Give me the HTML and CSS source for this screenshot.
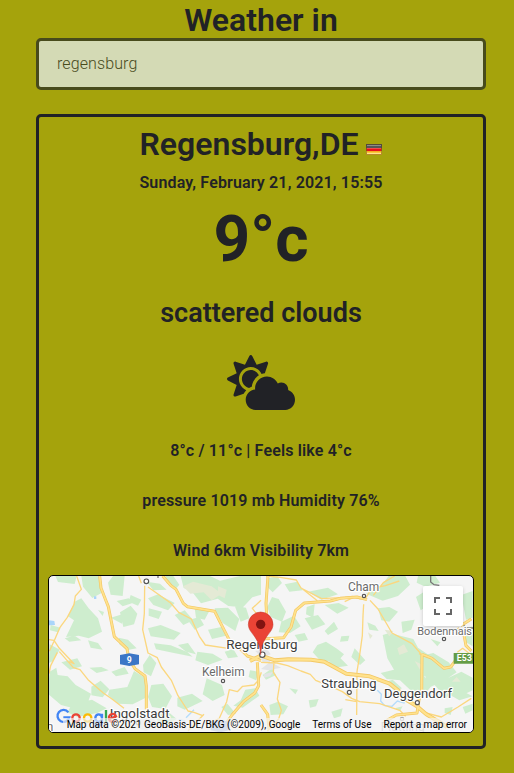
FILE: index.html
```html
<!DOCTYPE html>
<html lang="en">
<head>
<meta charset="utf-8">
<title>Weather</title>
<link rel="stylesheet" href="styles.css">
</head>
<body>
<main class="app">
  <h1 class="title">Weather in</h1>
  <input class="search" type="text" value="regensburg" aria-label="City">
  <section class="card">
    <h2 class="city">Regensburg,DE
      <svg class="flag" viewBox="0 0 16 11" shape-rendering="crispEdges"><path fill="#54493c" d="M0 0h16v4H0z"/><path fill="#9a4a1c" d="M0 4h16v3H0z"/><path fill="#b58a2a" d="M0 7h16v4H0z"/><path fill="#8d8d88" d="M1 1h14v1H1z"/><path fill="#555" d="M1 2h14v2H1z"/><path fill="#f04a4c" d="M1 4h14v1H1z"/><path fill="#e8101c" d="M1 5h14v2H1z"/><path fill="#f2ae20" d="M1 7h14v1H1z"/><path fill="#fbc83c" d="M1 8h14v1H1z"/><path fill="#ffe68a" d="M1 9h14v1H1z"/></svg>
    </h2>
    <p class="date">Sunday, February 21, 2021, 15:55</p>
    <p class="temp">9°c</p>
    <p class="summary">scattered clouds</p>
    <svg class="icon" viewBox="0 0 640 512" preserveAspectRatio="none"><path d="M575.200 325.700c.2-1.900.8-3.700.8-5.600 0-35.300-28.700-64-64-64-12.600 0-24.200 3.800-34.100 10-17.600-38.800-56.500-66-101.900-66-61.800 0-112 50.100-112 112 0 3 .7 5.800.9 8.700-49.600 3.700-88.900 44.700-88.900 95.300 0 53 43 96 96 96h272c53 0 96-43 96-96 0-42.100-27.200-77.400-64.800-90.400zm-430.400-22.600c-43.700-43.700-43.700-114.700 0-158.300 43.700-43.700 114.700-43.700 158.400 0 9.700 9.700 16.900 20.900 22.300 32.700 9.800-3.700 20.100-6 30.700-7.500L386 81.100c4-11.900-7.300-23.100-19.200-19.200L279 91.200 237.500 8.400C232-2.800 216-2.800 210.400 8.400L169 91.200 81.100 61.900C69.300 58 58 69.300 61.900 81.100l29.300 87.800-82.800 41.500c-11.200 5.600-11.200 21.500 0 27.100l82.800 41.400-29.300 87.800c-4 11.900 7.300 23.100 19.200 19.200l76.100-25.300c6.100-12.400 14-23.700 23.600-33.500-13.100-5.400-25.400-13.400-36-24zm-4.800-79.200c0 40.800 29.300 74.800 67.900 82.300 8-4.700 16.300-8.800 25.200-11.700 5.400-44.300 31-82.500 67.400-105C287.300 160.400 258 140 224 140c-46.300 0-84 37.600-84 83.900z"/></svg>
    <p class="detail">8°c / 11°c | Feels like 4°c</p>
    <p class="detail">pressure 1019 mb Humidity 76%</p>
    <p class="detail">Wind 6km Visibility 7km</p>
    <div class="map">
      <svg class="map-art" viewBox="3 3 1272 468" preserveAspectRatio="none">
        <g class="forest">
          <path d="M22 3h64l-6 24-50-6zM100 3h55l4 52-26 14-28-34zM80 80l20-10 22 30 28 30 12 40-40 20-30-8-38 4 24-50-18-12zM195 3h35l-6 60-36-4-8-36zM150 105l18 6-4 12zM188 128l40-12-6 30zM8 150l30 8-8 14-24-6zM5 208l30 16-20 34-12 6zM120 196l30 8 14 20-36-6zM40 262l48-12 14 24-36 10zM50 190l30-8 20 14-36 4z"/>
          <path d="M212 188l28 6 26 26-30 6-22-18zM216 112l32-20 20 24-10 32-32 8zM206 78l36-8 12 14-30 10zM248 60l32 14-10 18-28-12zM300 70l30-12 50 26-20 22-44-16zM302 100l40 10-10 22-30-10zM300 160l38-10 60 24-20 20-70-10zM318 205l50 6 50 20 16 14-60-12-50-10zM352 3h24l18 26-10 12-28-16zM380 120l30-14 26 30-30 14zM420 136l34-10 14 24-28 14zM296 20l40 6 20 18-40 2z"/>
          <path d="M5 290l20-12 4 22 30 4 24 26 46 26-8 22-50 20-32-8-40-34zM130 335l28-18 26 26-20 24-34-6zM184 344l54-8 20-48 34 20 6 58-44 22-44-2-30-26zM190 290l40-14 12 20-38 8zM285 270l20-30 20 24-16 40-22-12zM310 330l36-4 26 38-20 38-40-6-12-30zM124 278l36-2 22 10-36 8zM72 388l60-14 44 26-28 14-60 12-30-14zM388 368l44-12 32 22-54 26-22-10zM322 420l40-8 24 20-30 18-26-10z"/>
          <path d="M398 3h88l30 14 60-14h63v56l-26 8-28 30-44-4-32-22-50 14-28-36-24-10zM500 100l40-2 34 34-12 36-38-24-20-30zM560 92l34 6 10 32-26 10zM440 100l44 8-14 26-26-6zM480 164l40-8 14 26-42 10zM448 230l46 6 30 18-44 16-38-14zM530 230l26-8 14 24-30 4zM390 210l30-6 24 34-30-8zM476 310l46 20 8 30-36 18-30-20zM592 344l30-4 12 22-50 36-28-6 22-16zM520 396l18-10 26 30-24 4zM606 286l26 4-8 26-22-10z"/>
          <path d="M660 10l28-6 14 20-28 28-14-14zM710 28l38-8 16 26-40 4zM776 96l24-8-4 40-22-10zM672 66l20 6 22 38-12 30-34-14-10-30zM700 140l38-18 20 32-32 20-34-2zM770 130l40-10 22 28-40 16zM780 50l60-12 30 20-50 16zM830 90l42-6 30 14-34 18zM740 180l30-6 10 20-28 6zM830 168l28-28 12 22-30 18zM808 210l26-10 34 22 20 16-20 22-50-2-24-26zM880 184l24-2-4 16-24 2zM840 262l36-14 24 24-40 6z"/>
          <path d="M954 56l44-22 24-31h50l14 26-36 34-46 14zM990 100l34-4 26 14-26 30-24-4zM958 142l24 10 10 16-28-4zM1004 180l20-6 72 18 14 26 50 34 20 34-28 28-24-12 20 34-22 26-40-18-30-28-40-4-18-18 40-10-20-34zM1060 140l40-6-10 30-26 10zM1110 3h52l14 20-44 12-26-12zM1104 66l22-14 14 40-22 14zM1130 240l26-6 46 28 24 30-30 20 20 34-30 14-26-30-26 12zM1186 316l54-26 34 18v38l-38 18-24-14-20 22zM1196 354l40-10 38 20-40 12zM1246 160l28-6v60l-22-14zM1148 192l30 10-10 12zM1240 60l34-12v80l-20 6zM1046 280l30 12-6 20-34-10z"/>
          <path d="M664 390l26-10 30 14-14 24-38 2zM644 300l28-20 12 20-30 14zM724 340l26 4-8 14zM782 376l30-4-8 22-18 4zM850 410l34-10-6 24-20 6zM1010 322l24-8 28 26-20 8zM1040 400l24-6-8 14zM1190 400l24-4-6 24-18-6zM1244 396l30-10v20l-22 10zM920 220l32 36-16 14-26-24z"/>
        </g>
        <path class="heath" d="M405 34l30-14 56 14 30 22-30 20-24-24-40 4zM510 34l26 10-6 26-20-10zM1010 164l26 4-12 16zM1048 220l20-12 12 22-26 10zM1100 258l20 10-4 16zM960 172l14 10-8 10zM1178 346l22 6-14 16zM1212 320l14-14 12 14z"/>
        <path class="urban" d="M639 282l28-22 32 18-38 8zM648 298l28-8-10 14-18 4zM622 228l34-8 12 18-26 12zM640 250l30 2-6 12-20-2zM270 432l40-10 20 24-36 22-30-10z"/>
        <path class="water" d="M3 136l16 2 2 12-18 1zM138 64h7v8h-7z"/>
        <path class="river" d="M414 428l24-24M988 346l12 12-2 20 12 14 22 2 16-16 22 6M392 434l20 4"/>
        <path class="border" d="M1148 3v18l10 8 16 2M1232 144l16 8 6 6 24 1"/>
        <g class="road-minor">
          <path d="M86 3l14 40-18 20-4 26-20 38-22 30-18 42-14 30M3 194l15 2 16 24 44 46-14-6M28 232l-20 40-5 24M34 230l42 48 20 6 24 30 46 40 26 18 36 28"/>
          <path d="M290 32l-1 84-5 48 16 70 28 14 12 28 30 40 20 46 30 46 18 4 26 10M272 3l8 22M300 36l68 48 24 28 38 20 24 52 18 26 68 10M639 76l-26 24 22 28M420 468l32-34 16-16M640 292l-8 24-14 14-34 4-16 16-24-6-8 36-22 50-30 16"/>
          <path d="M655 3l42 4 48 8 14 24 62 32 70-4 24-3M760 39l48 38M950 74l22-34 40-8 42-14M947 88l-2 34-2 60-8 58-8 50-1 130M966 76l24 26 42 72 60 32 30 34M1040 3l-34 20-30 38M890 80l30-14 18 6"/>
          <path d="M639 262l48 2 32 8 40 16 28 10 16 18 40 16 40 18 28 20 24 10 60 6 60 20 18 18M926 380l-34-6M678 258l-2 34 20 30-8 50 12 34-8 26-34 36M1120 410l60 16 50-30 40-26M1270 240l-26-20-16 12M1125 240l-12-4"/>
        </g>
        <g class="roads">
          <path class="casing" d="M155 3l4 36 14 36 8 20 18 90 38 36 6 32 18 28 30 22 4 30v70M344 3l24 28 16 12 22 42 12 10 82 14 12 24 34 66 30 22 22 22 41 14M660 3l-6 82 2 36M639 192l68-4 22-32 14-50 26-22 78-6 30-8 50-4 30 8M1122 238l-1 120-8 16-6 40-62 6-28 16M1122 238l30 12 36 30 20-4 18-24M1228 160l20 20 6 32 16 16M1270 132l-32 20M639 390l20 28 4 44M628 262l4 70-12 22-34 26-34 40-20 28"/>
          <path class="casing wide" d="M606 258l33-16 42 14 40-3 68 1 40 6 66 36 70 8 60 22 30 24 12 20 40 24 28 24 34 20 28 18"/>
          <path class="fill" d="M155 3l4 36 14 36 8 20 18 90 38 36 6 32 18 28 30 22 4 30v70M344 3l24 28 16 12 22 42 12 10 82 14 12 24 34 66 30 22 22 22 41 14M660 3l-6 82 2 36M639 192l68-4 22-32 14-50 26-22 78-6 30-8 50-4 30 8M1122 238l-1 120-8 16-6 40-62 6-28 16M1122 238l30 12 36 30 20-4 18-24M1228 160l20 20 6 32 16 16M1270 132l-32 20M639 390l20 28 4 44M628 262l4 70-12 22-34 26-34 40-20 28"/>
          <path class="fill wide" d="M606 258l33-16 42 14 40-3 68 1 40 6 66 36 70 8 60 22 30 24 12 20 40 24 28 24 34 20 28 18"/>
        </g>
        <path fill="#3b76c6" d="M216 240l28-5 29 5v28l-29 5-28-5z"/>
        <path fill="#a8bce0" d="M488 440l28-6 28 6v26l-28 6-28-6z"/>
        <text class="shield" x="244" y="265">9</text>
        <path fill="#649c46" d="M1217 234h60v32h-60z"/>
        <text class="shield" x="1249" y="259" textLength="46">E53</text>
        <g class="dots"><circle cx="295" cy="19" r="7"/><circle cx="525" cy="318" r="5"/><circle cx="948" cy="63" r="5"/><circle cx="1188" cy="192" r="5"/><circle cx="904" cy="352" r="6"/><circle cx="1108" cy="383" r="6"/><circle cx="643" cy="239" r="8"/><circle class="faint" cx="1062" cy="432" r="5"/><circle class="faint" cx="271" cy="443" r="6"/></g>
        <path class="border" d="M330 3v6"/>
        <g class="labels">
          <text class="town" x="947" y="48" textLength="94" lengthAdjust="spacingAndGlyphs">Cham</text>
          <text class="town" x="526" y="303" textLength="128" lengthAdjust="spacingAndGlyphs">Kelheim</text>
          <text class="town small" x="1190" y="179" textLength="164" lengthAdjust="spacingAndGlyphs">Bodenmais</text>
          <text class="town faint" x="1064" y="468" textLength="132" lengthAdjust="spacingAndGlyphs">Plattling</text>
          <text x="642" y="221" textLength="214" lengthAdjust="spacingAndGlyphs">Regensburg</text>
          <text x="903" y="339" textLength="166" lengthAdjust="spacingAndGlyphs">Straubing</text>
          <text x="1110" y="369" textLength="204" lengthAdjust="spacingAndGlyphs">Deggendorf</text>
          <text x="275" y="428" textLength="179" lengthAdjust="spacingAndGlyphs">Ingolstadt</text>
          <text class="town" x="6" y="468">n</text>
        </g>
        <path fill="#ea4335" stroke="#c5382c" stroke-width="1.500" d="M638 239c-2-30-9-40-18-54-9-13-19-22-19-37a37 37 0 0 1 74 0c0 15-10 24-19 37-9 14-16 24-18 54z"/>
        <circle cx="638" cy="148" r="14" fill="#811411"/>
        <g class="google" fill="none">
          <path stroke="#4285f4" d="M61 412a18 18 0 1 0 3 15H46"/>
          <circle stroke="#ea4335" cx="84" cy="429" r="11"/>
          <circle stroke="#fbbc05" cx="119" cy="429" r="11"/>
          <path stroke="#4285f4" d="M162 429a10 11 0 1 0-20 0 10 11 0 1 0 20 0v-13 24c0 12-14 15-20 5"/>
          <path stroke="#34a853" d="M174 405v36"/>
          <path stroke="#ea4335" d="M184 432l20-8c-5-12-22-8-21 6 1 12 16 14 21 5"/>
        </g>
      </svg>
      <button class="fullscreen" aria-label="Toggle fullscreen"><svg viewBox="0 0 18 18"><path d="M0 0v6h2V2h4V0H0zm16 0h-4v2h4v4h2V0h-2zm0 16h-4v2h6v-6h-2v4zM2 12H0v6h6v-2H2v-4z"/></svg></button>
      <div class="credits"><span>Map data ©2021 GeoBasis-DE/BKG (©2009), Google</span><span>Terms of Use</span><span>Report a map error</span></div>
    </div>
  </section>
</main>
</body>
</html>
```
FILE: styles.css
```css
* { box-sizing: border-box; margin: 0; }
body {
  background: #a5a30c;
  color: #212226;
  font-family: Roboto, "Liberation Sans", sans-serif;
  text-align: center;
}
.app { padding: 0 28px 0 36px; height: 773px; overflow: hidden; }
.title, .city { font-size: 32px; font-weight: 600; line-height: 38px; }
.title { height: 38px; padding-top: 1px; }
.search {
  display: block;
  width: 100%;
  height: 52px;
  padding: 0 18px 2px;
  border: 3px solid #484b1c;
  border-radius: 5px;
  background: #d4dab5;
  color: #484b1c;
  font: 300 16px Roboto, "Liberation Sans", sans-serif;
  letter-spacing: .1px;
}
.card {
  height: 635px;
  margin-top: 24px;
  padding: 8px 9px;
  border: 3px solid #212226;
  border-radius: 5px;
}
.city { height: 38px; }
.flag { width: 16px; height: 11px; }
.date, .detail { font-size: 16px; font-weight: 600; line-height: 20px; letter-spacing: .15px; }
.date { margin-top: 10px; }
.temp { margin-top: 9px; font-size: 64px; font-weight: 700; line-height: 76px; }
.summary { margin-top: 19px; font-size: 27px; font-weight: 600; line-height: 32px; }
.icon { display: block; width: 68px; height: 55px; margin: 26px auto 0; fill: #212226; }
.detail { margin-top: 30px; }
.icon + .detail { margin-top: 31px; }
.map {
  position: relative;
  height: 158px;
  margin-top: 14px;
  border: 1px solid #000;
  border-radius: 5px;
  background: #f5f5f5;
  overflow: hidden;
}
.map-art { display: block; width: 100%; height: 100%; }
.forest { fill: #ceedce; }
.heath { fill: #e4ead5; }
.urban { fill: #e4e5e7; }
.water { fill: #a9d5fa; }
.river { fill: none; stroke: #b5dcfb; stroke-width: 4; }
.border { fill: none; stroke: #777; stroke-width: 4; }
.road-minor { fill: none; stroke: #fbd77f; stroke-width: 4; stroke-linejoin: round; }
.roads { fill: none; stroke-linejoin: round; }
.casing { stroke: #f3c865; stroke-width: 9; }
.fill { stroke: #ffe28d; stroke-width: 5; }
.casing.wide { stroke-width: 12; }
.fill.wide { stroke-width: 7; }
.shield { fill: #fff; font-size: 26px; font-weight: 700; text-anchor: middle; }
.dots { fill: #fff; stroke: #555; stroke-width: 3.5; }
.faint { opacity: .45; }
.labels { fill: #3c3c3c; font-size: 40px; text-anchor: middle; stroke: #fff; stroke-width: 7; stroke-linejoin: round; paint-order: stroke; }
.town { fill: #6b6b6b; font-size: 37px; }
.small { font-size: 34px; }
.google { stroke-width: 7; }
.fullscreen {
  position: absolute;
  top: 10px;
  right: 10px;
  display: grid;
  place-items: center;
  width: 40px;
  height: 40px;
  padding: 0;
  border: 0;
  border-radius: 2px;
  background: #fff;
  box-shadow: 0 1px 4px -1px rgba(0, 0, 0, .3);
}
.fullscreen svg { width: 18px; height: 18px; fill: #666; }
.credits {
  position: absolute;
  right: 0;
  bottom: 0;
  display: flex;
  gap: 12px;
  padding: 0 6px 0 4px;
  background: rgba(245, 245, 245, .65);
  color: #000;
  font-size: 10px;
  line-height: 14px;
  white-space: nowrap;
}
```
